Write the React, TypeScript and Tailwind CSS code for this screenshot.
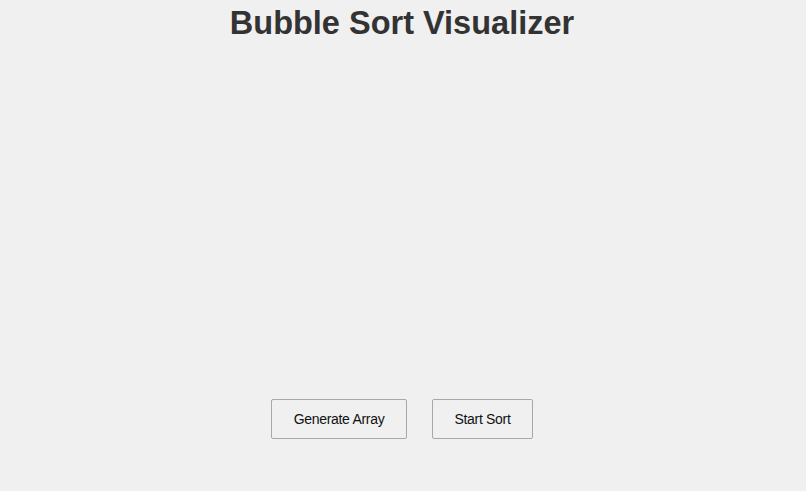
import React from 'react';

const App: React.FC = () => {
    return (
        <div className="min-h-screen bg-[#f0f0f0] pr-[2px] font-['Liberation_Sans',Arial,sans-serif]">
            <h1 className="pt-[5px] text-center text-[32.5px] leading-[37px] font-bold text-[#333333]">Bubble Sort Visualizer</h1>
            {/* bars area: empty until an array is generated */}
            <div className="h-[357px]" />
            <div className="flex justify-center gap-[25px]">
                <button className="h-[40px] w-[136px] rounded-[2px] border border-[#a8a8a8] bg-[#f0f0f0] text-[14px] tracking-[-0.3px] text-[#111111]">
                    Generate Array
                </button>
                <button className="h-[40px] w-[101px] rounded-[2px] border border-[#a8a8a8] bg-[#f0f0f0] text-[14px] tracking-[-0.3px] text-[#111111]">
                    Start Sort
                </button>
            </div>
        </div>
    );
};

export default App;
